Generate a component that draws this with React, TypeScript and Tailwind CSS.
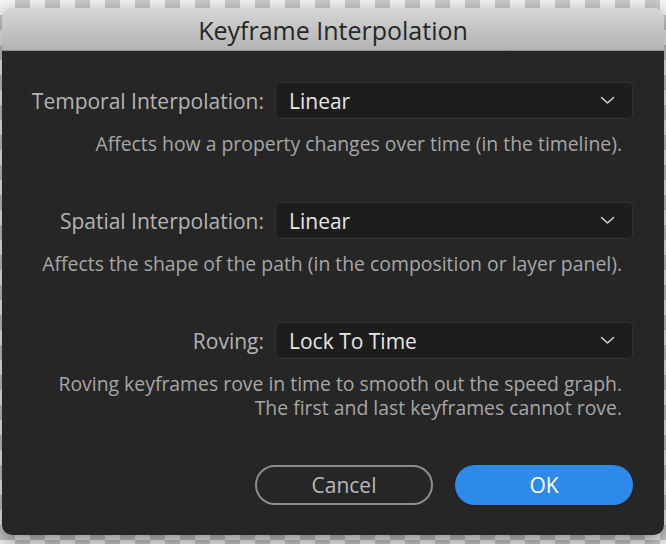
import React from 'react';

function Chevron() {
    return (
        <svg width="15" height="9" viewBox="0 0 15 9" fill="none" className="shrink-0">
            <path d="M1.5 1.5 L7.5 7 L13.5 1.5" stroke="#cfcfcf" strokeWidth="1.6" strokeLinecap="round" strokeLinejoin="round" />
        </svg>
    );
}

function Dropdown({ value }: { value: string }) {
    return (
        <div className="flex h-[37px] w-[358px] items-center justify-between rounded-[5px] border border-[#333333] bg-[#1d1d1d] pl-[13px] pr-[17px]">
            <span className="pt-[2px] text-[21px] text-[#e6e6e6]">{value}</span>
            <Chevron />
        </div>
    );
}

function Row({ label, value, lines }: { label: string; value: string; lines: string[] }) {
    return (
        <div className="flex flex-col">
            <div className="flex items-center justify-end gap-[11px]">
                <span className="pt-[2px] text-[21px] text-[#b4b4b4]">{label}</span>
                <Dropdown value={value} />
            </div>
            <div className="mt-[13px] flex flex-col items-end pr-[11px] text-[19.4px] leading-[24px] text-[#a6a6a6]">
                {lines.map((line, i) => (
                    <span key={i}>{line}</span>
                ))}
            </div>
        </div>
    );
}

export default function App() {
    return (
        <div
            className="h-[544px] w-[666px] overflow-hidden bg-[conic-gradient(#c9c9c9_25%,#f3f3f3_0_50%,#c9c9c9_0_75%,#f3f3f3_0)] bg-[length:30px_30px] pl-[2px] pt-[8px]"
            style={{ fontFamily: '"Open Sans", "Noto Sans", sans-serif' }}
        >
            <div className="flex w-[662px] flex-col overflow-hidden rounded-[10px] shadow-[0_6px_18px_rgba(0,0,0,0.45)]">
                <div className="flex h-[43px] items-center justify-center border-b border-[#8e8e8e] bg-gradient-to-b from-[#d6d6d6] to-[#b3b3b3]">
                    <span className="pt-[2px] text-[25px] leading-none text-[#262626]">Keyframe Interpolation</span>
                </div>
                <div className="flex flex-col bg-[#262626] pb-[30px] pr-[31px] pt-[31px]">
                    <Row
                        label="Temporal Interpolation:"
                        value="Linear"
                        lines={['Affects how a property changes over time (in the timeline).']}
                    />
                    <div className="mt-[46px]">
                        <Row
                            label="Spatial Interpolation:"
                            value="Linear"
                            lines={['Affects the shape of the path (in the composition or layer panel).']}
                        />
                    </div>
                    <div className="mt-[46px]">
                        <Row
                            label="Roving:"
                            value="Lock To Time"
                            lines={[
                                'Roving keyframes rove in time to smooth out the speed graph.',
                                'The first and last keyframes cannot rove.',
                            ]}
                        />
                    </div>
                    <div className="mt-[45px] flex justify-end gap-[22px]">
                        <button className="h-[40px] w-[178px] rounded-full border-2 border-[#8c8c8c] pt-[1px] text-[21px] text-[#b9b9b9]">
                            Cancel
                        </button>
                        <button className="h-[40px] w-[178px] rounded-full bg-[#2d8aeb] pt-[1px] text-[21px] text-white">
                            OK
                        </button>
                    </div>
                </div>
            </div>
        </div>
    );
}
